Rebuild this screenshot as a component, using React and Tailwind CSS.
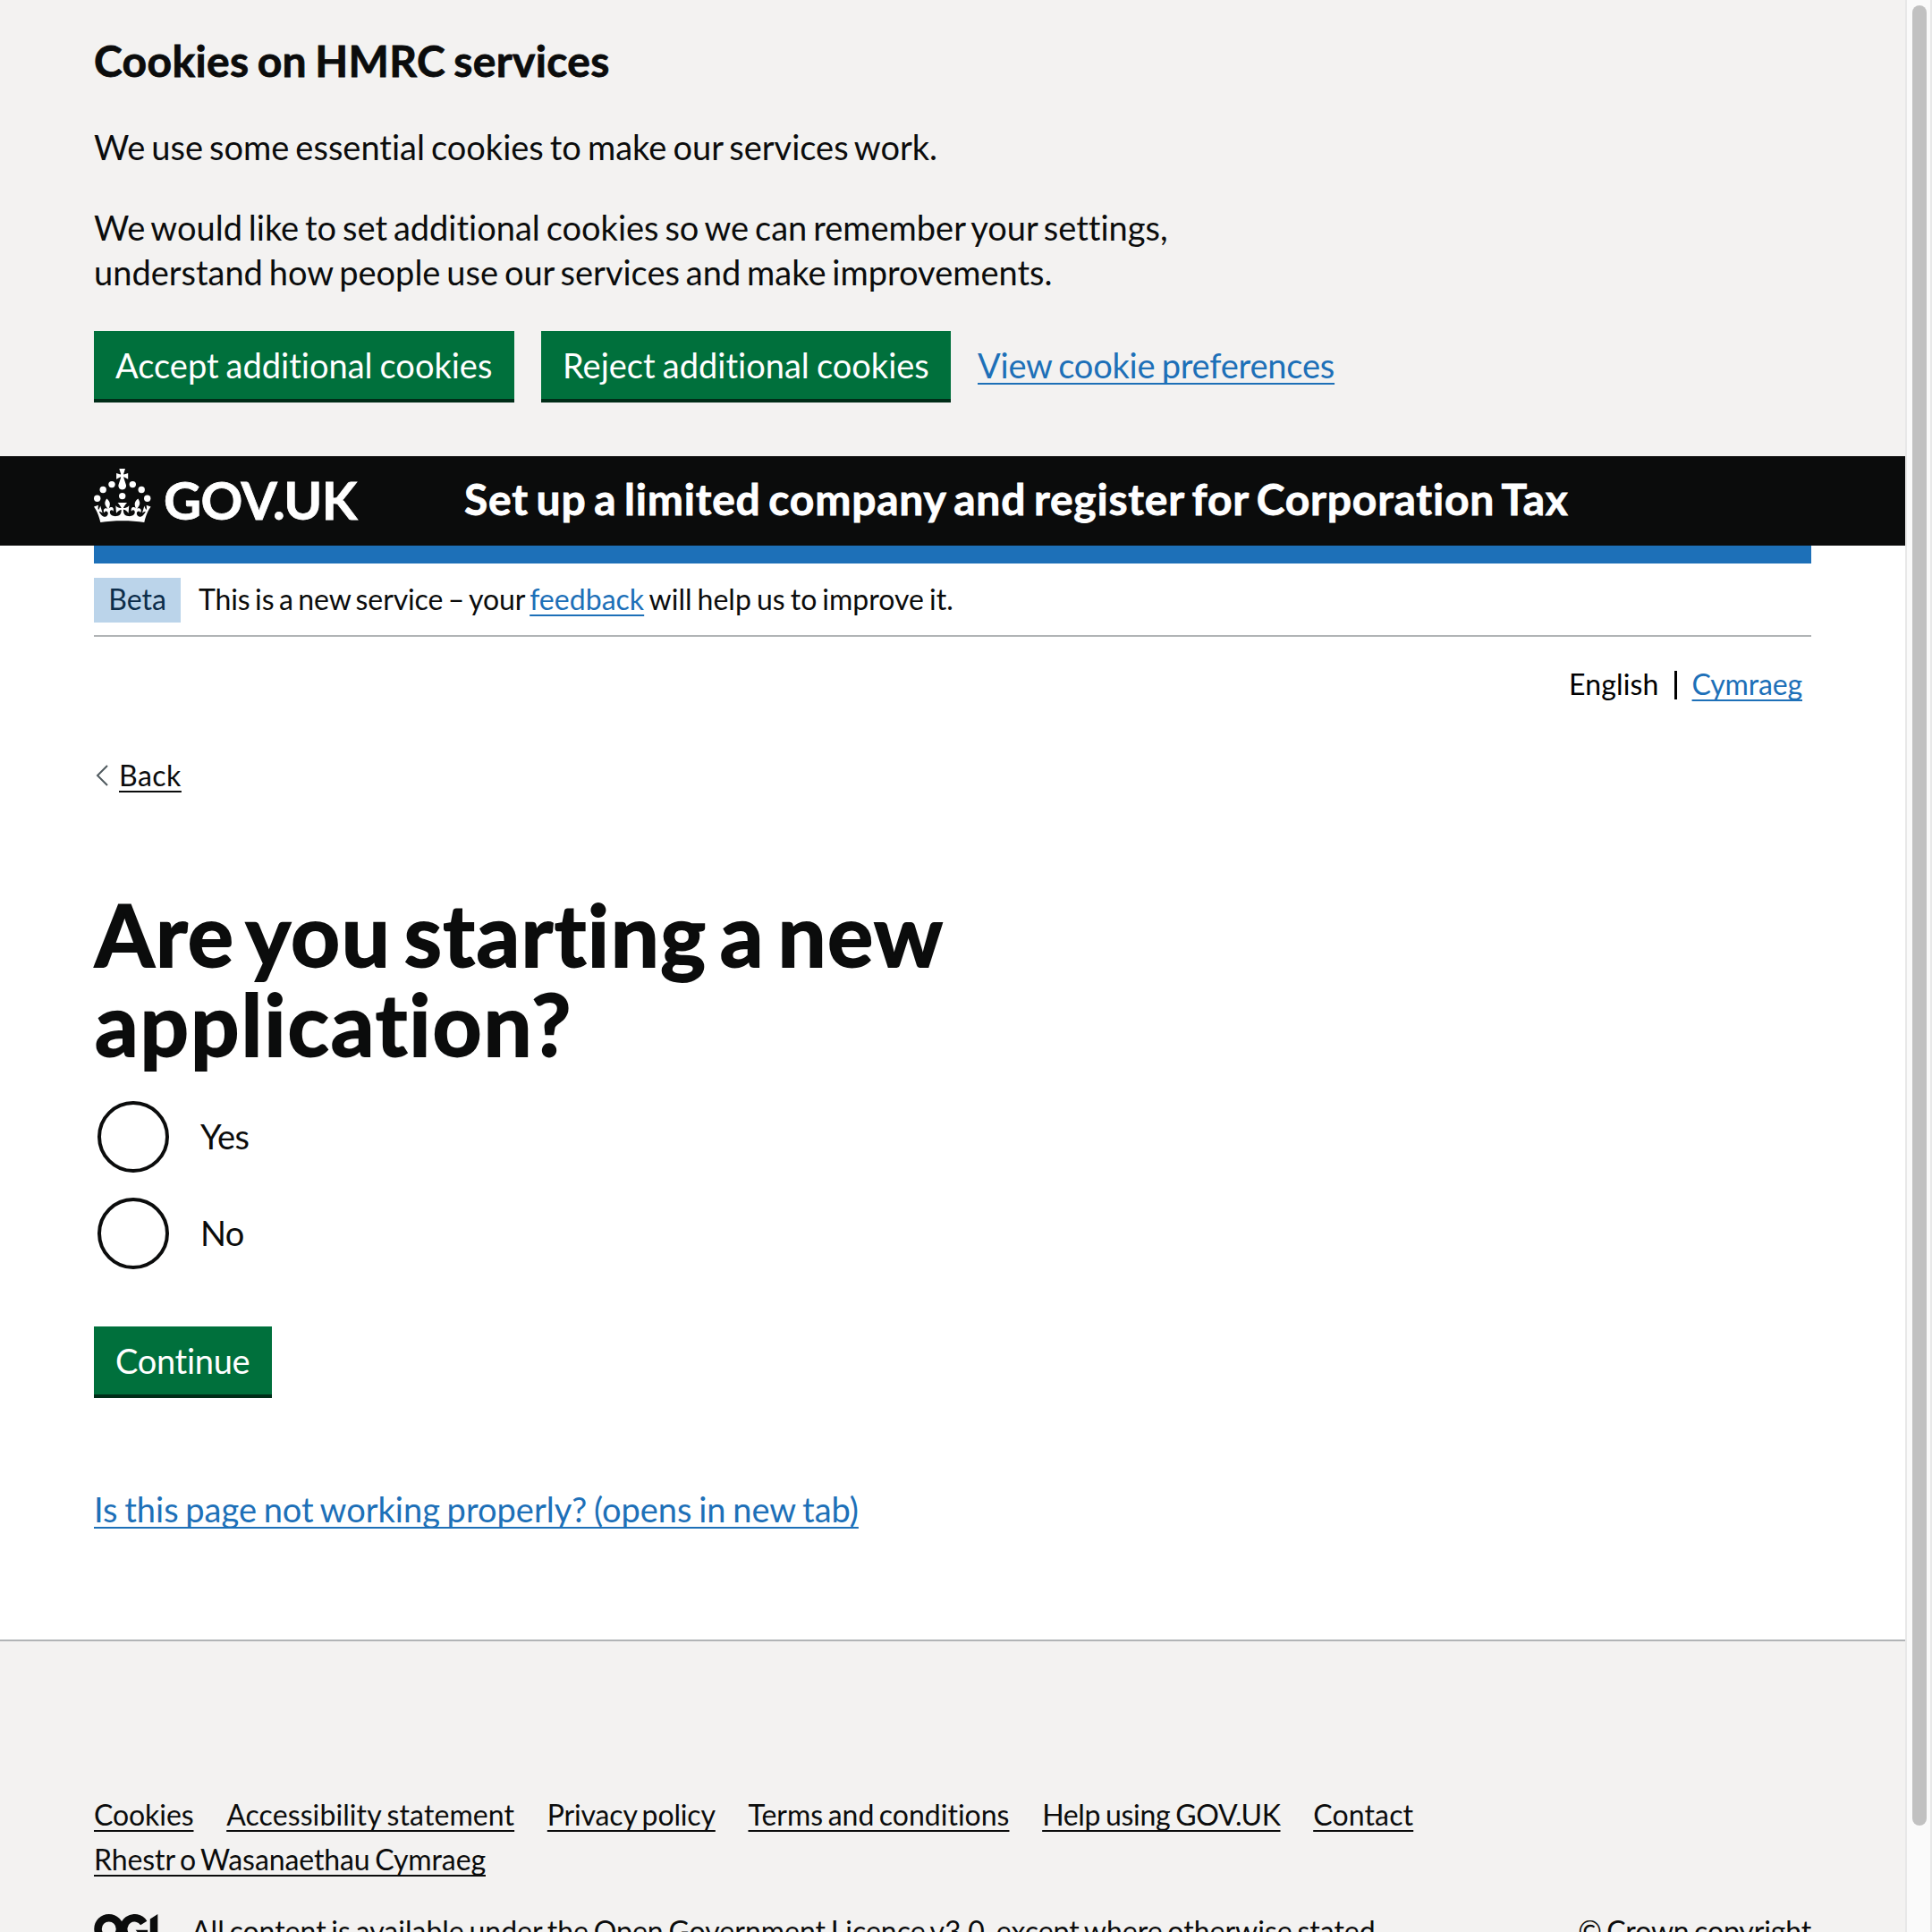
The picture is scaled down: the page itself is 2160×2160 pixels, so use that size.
import React from "react";

const LINK = "whitespace-nowrap underline decoration-[2px] underline-offset-[5px] [text-decoration-skip-ink:none]";

const FOOTER_LINKS = [
  { label: "Cookies", spacing: "tracking-[-0.08px]" },
  { label: "Accessibility statement", spacing: "tracking-[0.1px] [word-spacing:-1.7px]" },
  { label: "Privacy policy", spacing: "tracking-[-0.15px] [word-spacing:-2.5px]" },
  { label: "Terms and conditions", spacing: "[word-spacing:-2.7px]" },
  { label: "Help using GOV.UK", spacing: "tracking-[-0.35px] [word-spacing:-1.8px]" },
  { label: "Contact", spacing: "tracking-[0.15px]" },
];

const OPTIONS = [
  { label: "Yes", spacing: "tracking-[-0.5px]" },
  { label: "No", spacing: "tracking-[-0.6px]" },
];

function Crown() {
  return (
    <svg width="64" height="60" viewBox="0 0 64 60" fill="currentColor" className="block shrink-0">
      <circle cx="20" cy="17.6" r="3.7" />
      <circle cx="10.2" cy="23.5" r="3.7" />
      <circle cx="3.7" cy="33.2" r="3.7" />
      <circle cx="31.7" cy="30.6" r="3.7" />
      <circle cx="43.3" cy="17.6" r="3.7" />
      <circle cx="53.2" cy="23.5" r="3.7" />
      <circle cx="59.7" cy="33.2" r="3.7" />
      <path d="M33.1,9.8c.2-.1.3-.3.5-.5l4.6,2.4v-6.8l-4.6,1.5c-.1-.2-.3-.3-.5-.5l1.9-5.9h-6.7l1.9,5.9c-.2.1-.3.3-.5.5l-4.6-1.5v6.8l4.6-2.4c.1.2.3.3.5.5l-2.6,8c-.9,2.8,1.2,5.7,4.1,5.7h0c3,0,5.1-2.9,4.1-5.7l-2.6-8ZM37,37.9s-3.4,3.8-4.1,6.1c2.2,0,4.2-.5,6.4-2.8l-.7,8.5c-2-2.8-4.4-4.1-5.7-3.8.1,3.1.5,6.7,5.8,7.2,3.7.3,6.7-1.5,7-3.8.4-2.6-2-4.3-3.7-1.6-1.4-4.5,2.4-6.1,4.9-3.2-1.9-4.5-1.8-7.7,2.4-10.9,3,4,2.6,7.3-1.2,11.1,2.4-1.3,6.2,0,4,4.6-1.2-2.8-3.7-2.2-4.2.2-.3,1.7.7,3.7,3,4.2,1.9.3,4.7-.9,7-5.9-1.3,0-2.4.7-3.9,1.7l2.4-8c.6,2.3,1.4,3.7,2.2,4.5.6-1.6.5-2.8,0-5.3l5,1.8c-2.6,3.6-5.2,8.7-7.3,17.5-7.4-1.1-15.7-1.7-24.5-1.7h0c-8.8,0-17.1.6-24.5,1.7-2.1-8.9-4.7-13.9-7.3-17.5l5-1.8c-.5,2.5-.6,3.7,0,5.3.8-.8,1.6-2.3,2.2-4.5l2.4,8c-1.5-1-2.6-1.7-3.9-1.7,2.3,5,5.2,6.2,7,5.9,2.3-.4,3.3-2.4,3-4.2-.5-2.4-3-3.1-4.2-.2-2.2-4.6,1.6-6,4-4.6-3.7-3.7-4.2-7.1-1.2-11.1,4.2,3.2,4.3,6.4,2.4,10.9,2.5-2.8,6.3-1.3,4.9,3.2-1.8-2.7-4.1-1-3.7,1.6.3,2.3,3.3,4.1,7,3.8,5.4-.5,5.7-4.2,5.8-7.2-1.3-.2-3.7,1-5.7,3.8l-.7-8.5c2.2,2.3,4.2,2.7,6.4,2.8-.7-2.3-4.1-6.1-4.1-6.1h10.6Z" />
    </svg>
  );
}

function LicenceLogo() {
  return (
    <svg width="82" height="33" viewBox="0 0 483.2 195.7" className="mt-[6px] block shrink-0">
      <circle cx="97.8" cy="97.8" r="72.5" fill="none" stroke="currentColor" strokeWidth="50.6" />
      <path d="M329 59A72.5 72.5 0 1 0 316 152" fill="none" stroke="currentColor" strokeWidth="50.6" />
      <path d="M275 105.7h80v87.8h-3z" fill="currentColor" />
      <path d="M421.5 142.8V.1l-50.7 32.3v161.1h112.4v-50.7z" fill="currentColor" />
    </svg>
  );
}

function Button({ children, className }) {
  return (
    <button
      className={
        "h-[76px] shrink-0 bg-[#00703c] pt-[19px] pb-[19px] pl-[24px] text-left text-[38px] leading-[38px] whitespace-nowrap text-white shadow-[0_4px_0_#002d18] " +
        className
      }
    >
      {children}
    </button>
  );
}

export default function App() {
  return (
    <div className="flex h-[2160px] w-[2160px] overflow-hidden bg-white font-['Lato','Open_Sans',sans-serif] text-[#0b0c0c] [font-variant-ligatures:none]">
      <div className="h-full w-[2130px] shrink-0">
        <section className="h-[510px] bg-[#f3f2f1] px-[105px] pt-[38px]">
          <h2 className="text-[48px] leading-[60px] font-bold tracking-[0.35px] [word-spacing:-2.8px] [-webkit-text-stroke:0.8px]">
            Cookies on HMRC services
          </h2>
          <p className="mt-[41px] text-[38px] leading-[50px] [word-spacing:-2.7px]">
            We use some essential cookies to make our services work.
          </p>
          <p className="mt-10 text-[38px] leading-[50px] whitespace-nowrap [word-spacing:-2.85px]">
            We would like to set additional cookies so we can remember your settings,
            <br />
            understand how people use our services and make improvements.
          </p>
          <div className="mt-[41px] flex">
            <Button className="w-[470px] [word-spacing:-1.7px]">Accept additional cookies</Button>
            <Button className="ml-[30px] w-[458px] [word-spacing:-1.5px]">Reject additional cookies</Button>
            <a className={"mt-[19px] ml-[30px] text-[38px] leading-[38px] tracking-[-0.2px] text-[#1d70b8] [word-spacing:-2.3px] " + LINK}>
              View cookie preferences
            </a>
          </div>
        </section>

        <header className="flex h-[100px] bg-[#0b0c0c] px-[105px] text-white">
          <div className="flex w-[414px] pt-[14px]">
            <Crown />
            <span className="ml-[14px] text-[58px] leading-[69px] font-bold tracking-[-0.6px] [-webkit-text-stroke:0.8px]">GOV.UK</span>
          </div>
          <div className="pt-[18px] text-[48px] leading-[60px] font-bold tracking-[0.78px] whitespace-nowrap [word-spacing:-3.7px] [-webkit-text-stroke:0.8px]">
            Set up a limited company and register for Corporation Tax
          </div>
        </header>

        <div className="mx-[105px]">
          <div className="h-5 bg-[#1d70b8]" />
          <div className="flex h-[82px] border-b-2 border-[#b1b4b6] pt-4 text-[32px] leading-[48px]">
            <strong className="h-[50px] w-[97px] bg-[#bbd4ea] text-center font-normal text-[#0c2d4a]">Beta</strong>
            <span className="ml-5 whitespace-pre">
              <span className="tracking-[-0.12px] [word-spacing:-2.5px]">This is a new service – your </span>
              <a className={"tracking-[0.03px] text-[#1d70b8] " + LINK}>feedback</a>
              <span className="[word-spacing:-2.1px]"> will help us to improve it.</span>
            </span>
          </div>
          <nav className="flex justify-end pt-[28px] pr-[10px] text-[32px] leading-[50px]">
            <span className="tracking-[0.15px] text-black">English</span>
            <span className="mt-[10px] mr-[17px] ml-[17px] h-8 w-[3px] bg-black" />
            <a className={"tracking-[-0.15px] text-[#1d70b8] " + LINK}>Cymraeg</a>
          </nav>
          <div className="mt-[52px] flex h-[50px] text-[32px] leading-[50px]">
            <svg width="16" height="26" viewBox="0 0 16 26" className="mt-[12px] mr-[12px] block" fill="none" stroke="#505a5f" strokeWidth="2">
              <path d="M15 2 4 13l11 11" />
            </svg>
            <a className={"tracking-[0.5px] " + LINK}>Back</a>
          </div>
          <h1 className="mt-[102px] pl-px text-[96px] leading-[100px] font-bold tracking-[1.4px] whitespace-nowrap [word-spacing:-10.2px] [-webkit-text-stroke:1.8px]">
            Are you starting a new
            <br />
            <span className="tracking-[1.9px]">application?</span>
          </h1>
          <div className="mt-[37px] flex flex-col gap-7">
            {OPTIONS.map(({ label, spacing }) => (
              <label key={label} className="flex h-20 items-start text-[38px] leading-[78px]">
                <span className="ml-1 h-20 w-20 rounded-full border-4 border-[#0b0c0c]" />
                <span className={"ml-[35px] " + spacing}>{label}</span>
              </label>
            ))}
          </div>
          <div className="mt-16 flex">
            <Button className="w-[199px] tracking-[-0.3px]">Continue</Button>
          </div>
          <p className="mt-[103px] text-[38px] leading-[50px]">
            <a className={"text-[#1d70b8] [word-spacing:-2.05px] " + LINK}>Is this page not working properly? (opens in new tab)</a>
          </p>
        </div>

        <footer className="mt-[121px] h-[327px] border-t-2 border-[#b1b4b6] bg-[#f3f2f1] px-[105px] pt-[169px] text-[32px] leading-[50px]">
          <ul className="flex h-[50px] gap-[36.7px]">
            {FOOTER_LINKS.map(({ label, spacing }) => (
              <li key={label}>
                <a className={LINK + " " + spacing}>{label}</a>
              </li>
            ))}
          </ul>
          <div>
            <a className={"tracking-[-0.1px] [word-spacing:-2.5px] " + LINK}>Rhestr o Wasanaethau Cymraeg</a>
          </div>
          <div className="mt-[30px] flex whitespace-nowrap">
            <LicenceLogo />
            <span className="ml-[27px] [word-spacing:-2.45px]">
              All content is available under the Open Government Licence v3.0, except where otherwise stated
            </span>
            <span className="ml-auto tracking-[-0.15px] [word-spacing:-2.5px]">© Crown copyright</span>
          </div>
        </footer>
      </div>
      <div className="h-full w-[30px] shrink-0 border-x-2 border-[#e8e8e8] bg-[#fafafa] px-[6px] pt-[6px]">
        <div className="h-[2035px] w-4 rounded-full bg-[#c1c1c1]" />
      </div>
    </div>
  );
}
